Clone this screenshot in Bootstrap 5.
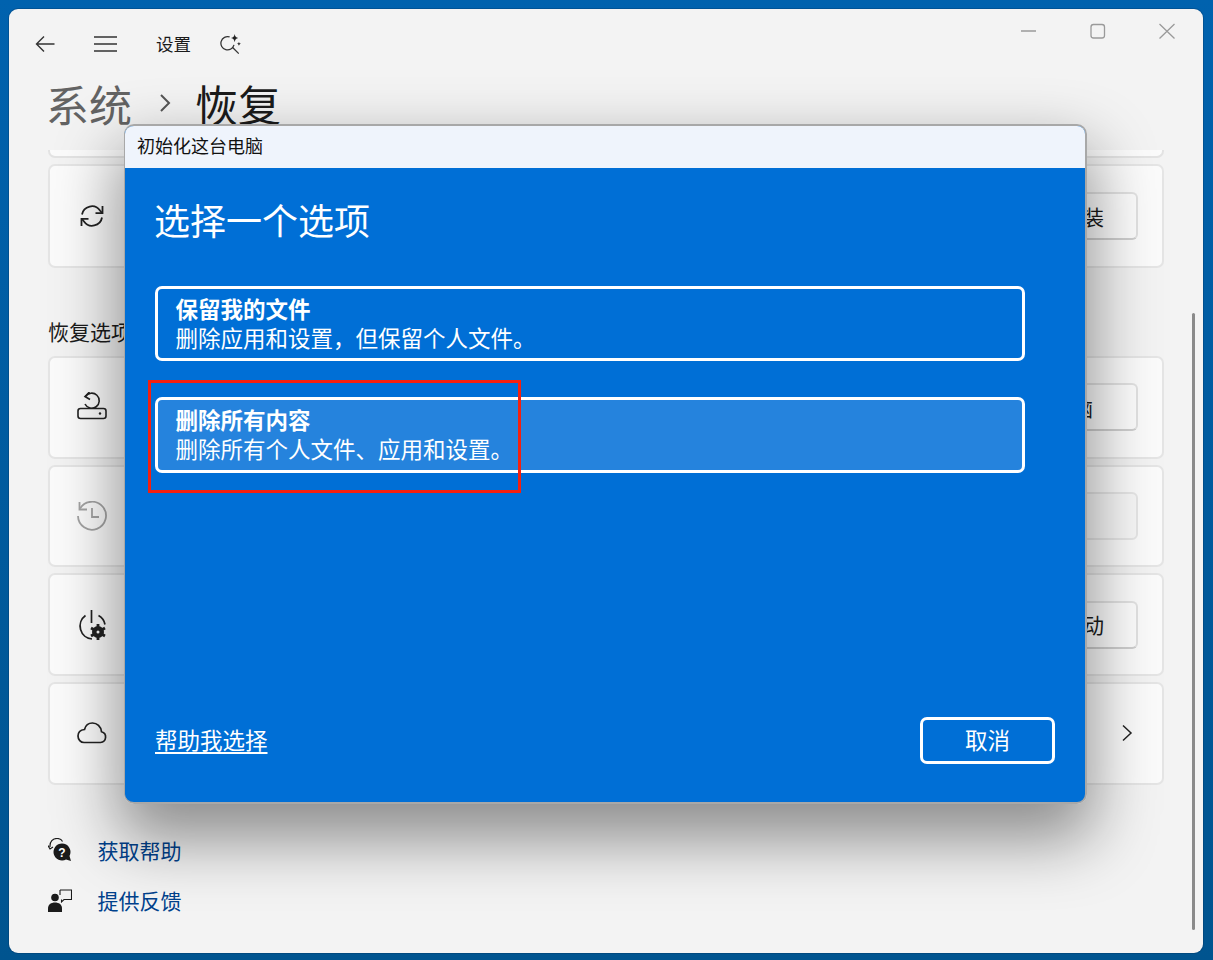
<!DOCTYPE html>
<html lang="zh-CN">
<head>
<meta charset="utf-8">
<title>设置 - 恢复</title>
<link href="https://cdn.jsdelivr.net/npm/bootstrap@5.3.0/dist/css/bootstrap.min.css" rel="stylesheet">
<style>
html,body{height:100%;overflow:hidden}
body{background:linear-gradient(180deg,#0062ae,#00548f);font-family:"Noto Sans CJK SC","Liberation Sans",sans-serif;color:#1b1b1b}
svg{display:block;flex:none}
.win{position:relative;margin:9px 10px 0 9px;height:944px;background:#f3f3f3;border-radius:9px;box-shadow:0 0 0 1px rgba(0,40,80,.25);overflow:hidden}
.tbar{height:70px;padding-left:26px}
.tbar-ham{margin-left:38px}
.tbar-search{margin-left:29px}
.tbar-title{font-size:17.5px;margin-left:39px;line-height:24px}
.winctl{position:absolute;top:0;left:0}
.crumb{height:48px;padding-left:37px;font-size:43px;line-height:48px;font-weight:400;margin:0 0 23px}
.crumb-dim{color:#636363}
.crumb-sep{margin:0 24px 0 27px}
.scroller{padding:0 39px}
.stub{height:8px;background:#fbfbfb;border:2px solid #e3e3e3;border-top:0;border-radius:0 0 7px 7px;margin-bottom:6px}
.row-card{height:102.5px;padding:0 24px 0 27px;background:#fbfbfb;border:2px solid #e5e5e5;border-radius:7px}
.row-card.tall{height:104px}
.sync-ico{margin-left:2px}
.sect{font-size:21px;line-height:30px;margin:48px 0 10px 0}
.stack{row-gap:6.2px}
.act{margin-left:auto;height:48px;width:300px;background:#fdfdfd;border:2px solid #e2e2e2;border-bottom-color:#cfcfcf;border-radius:6px;font-size:21px;line-height:41px;color:#1b1b1b;text-align:right;padding:0 32px 0 0;white-space:nowrap}
.act-wide{padding-right:43px}
.act-off,.act-off:disabled{background:#f8f8f8;border-color:#e6e6e6;opacity:1}
.go{margin-left:auto;margin-right:5px}
.foot{margin-top:50px;row-gap:20px;font-size:21px;line-height:30px}
.foot a{color:#00418c;text-decoration:none;margin-left:25.500px}
.scrollthumb{position:absolute;left:1183px;top:304px;width:3px;height:617px;background:#8a8a8a;border-radius:2px}
.dlg{position:absolute;left:115px;top:115px;width:963px;height:680px;border:2px solid #a8a8a8;border-left-width:1px;border-radius:10px;overflow:hidden;background:#006fd6}
.dlgwrap{position:absolute;left:115px;top:115px;width:963px;height:680px;border-radius:10px;box-shadow:0 30px 64px 6px rgba(0,0,0,.42)}
.dlg-top{height:42px;background:#eff4fc;color:#111;font-size:18px;line-height:38px;padding-left:12px}
.dlg-main{height:635px;padding:28px 30px 39px;color:#fff}
.dlg-h{font-size:36px;line-height:46px;font-weight:400;margin:0 0 44px -1px}
.opt{width:870px;height:75px;border:3px solid #fff;border-radius:7px;padding:5px 17.500px 0;line-height:29px;font-size:22.5px;margin-bottom:36px}
.opt-on{height:76px;background:#2583dd}
.opt b{display:block;font-weight:700}
.opt span{display:block}
.helplink{color:#fff;font-size:22.5px;line-height:30px;text-decoration:underline;text-underline-offset:3px;margin-bottom:4px}
.helplink:hover{color:#fff}
.cancel{width:135px;height:47px;border:3px solid #fff;border-radius:7px;background:transparent;color:#fff;font-size:22.5px;line-height:39px;padding:0 0 2px}
.cancel:hover{color:#fff}
.redmark{position:absolute;left:23px;top:254px;width:373px;height:113px;border:3px solid #f4200f;pointer-events:none}
</style>
</head>
<body>
<main class="win">
  <header class="tbar d-flex align-items-center">
    <svg width="21" height="18" viewBox="0 0 21 18" fill="none" stroke="#333" stroke-width="1.4"><path d="M19.5 9H1.5M9 1.5 1.5 9 9 16.5"/></svg>
    <svg class="tbar-ham" width="23" height="16" viewBox="0 0 23 16" fill="none" stroke="#333" stroke-width="1.5"><path d="M0 1h23M0 8h23M0 15h23"/></svg>
    <span class="tbar-title">设置</span>
    <svg class="tbar-search" width="22" height="21" viewBox="0 0 24 23" fill="none" stroke="#333" stroke-width="1.4"><path d="M10.500 3.200A7.300 7.300 0 1 0 15.300 12"/><path d="m13.500 14.500 7 7"/><path d="M16 0c.6 3 1.300 3.800 4 4.500-2.700.7-3.400 1.500-4 4.500-.6-3-1.300-3.800-4-4.500 2.700-.7 3.400-1.500 4-4.500Z" fill="#222" stroke="none"/><path d="M20.700 8.500c.3 1.500.7 1.900 2.300 2.300-1.600.4-2 .8-2.300 2.300-.3-1.500-.7-1.900-2.300-2.300 1.600-.4 2-.8 2.300-2.300Z" fill="#222" stroke="none"/></svg>
  </header>
  <svg class="winctl" width="1194" height="50" viewBox="0 0 1194 50" fill="none" stroke="#9a9a9a" stroke-width="1.3"><path d="M1012 22h15"/><rect x="1082" y="15.500" width="13.500" height="13.500" rx="2.500"/><path d="m1150.500 15 15 14.500m0-14.500-15 14.500"/></svg>

  <h1 class="crumb d-flex align-items-center"><span class="crumb-dim">系统</span><svg class="crumb-sep" width="12" height="20" viewBox="0 0 12 20" fill="none" stroke="#555" stroke-width="2"><path d="m2 2 8 8-8 8"/></svg><span>恢复</span></h1>

  <section class="scroller">
    <div class="stub"></div>
    <div class="row-card tall d-flex align-items-center">
      <svg class="sync-ico" width="26" height="26" viewBox="0 0 26 26" fill="none" stroke="#222" stroke-width="1.800"><path d="M3 11.500A10 10 0 0 1 21 7.500l2 2.500"/><path d="M23.500 3v7.200h-7"/><path d="M23 14.500A10 10 0 0 1 5 18.500L3 16"/><path d="M2.500 23v-7.200h7"/></svg>
      <button type="button" class="btn act">现在重新安装</button>
    </div>
    <h2 class="sect fw-normal">恢复选项</h2>
    <div class="d-flex flex-column stack">
      <div class="row-card d-flex align-items-center">
        <svg width="30" height="30" viewBox="0 0 30 30" fill="none" stroke="#222" stroke-width="1.600"><path d="M8.500 4.500A7.500 7.500 0 1 1 8 12"/><path d="M12.500 0 8 4.500 13 7.500"/><rect x="1" y="16.500" width="28" height="10" rx="2.500" fill="#fbfbfb"/><circle cx="23" cy="21.500" r="1.200" fill="#222" stroke="none"/></svg>
        <button type="button" class="btn act act-wide">初始化电脑</button>
      </div>
      <div class="row-card d-flex align-items-center">
        <svg width="30" height="30" viewBox="0 0 30 30" fill="none" stroke="#a3a3a3" stroke-width="1.800"><path d="M3 7.500A14 14 0 1 1 1 15"/><path d="M2.500 1v7.500H10"/><path d="M15 7v9h7"/></svg>
        <button type="button" class="btn act act-off" disabled></button>
      </div>
      <div class="row-card d-flex align-items-center">
        <svg width="30" height="30" viewBox="0 0 30 30" fill="none" stroke="#222" stroke-width="1.700"><path d="M8.500 5.500A13 13 0 0 0 15 29"/><path d="M21.500 5.500a13 13 0 0 1 6.500 9"/><path d="M14.500 0v13"/><circle cx="21" cy="22" r="4.500" fill="#222" stroke-width="3"/><path d="M21 14v16M14 18l14 8M14 26l14-8" stroke-width="2.800"/><circle cx="21" cy="22" r="1.500" fill="#fbfbfb" stroke="none"/></svg>
        <button type="button" class="btn act">立即重新启动</button>
      </div>
      <div class="row-card d-flex align-items-center">
        <svg width="30" height="22" viewBox="0 0 30 22" fill="none" stroke="#222" stroke-width="1.700"><path d="M7 20.500h16.500a5.500 5.500 0 0 0 1-10.800C24 4.500 20 1 15.500 1 11.500 1 8.500 3.500 7.500 7.500 3.500 8 1 10.500 1 14c0 3.500 2.700 6.500 6 6.500Z"/></svg>
        <svg class="go" width="12" height="18" viewBox="0 0 12 18" fill="none" stroke="#222" stroke-width="1.500"><path d="m2 1.500 8 7.500-8 7.500"/></svg>
      </div>
    </div>
    <div class="foot d-flex flex-column">
      <div class="d-flex align-items-center">
        <svg width="24" height="24" viewBox="0 0 24 24"><path d="M2 9C1.500 3.500 5 .5 9 .5c2.500 0 4.500 1 5.500 3" fill="none" stroke="#1b1b1b" stroke-width="1.200"/><path d="m0 7.500 2 3.500 3-2" fill="none" stroke="#1b1b1b" stroke-width="1.200"/><path d="M14 5.500a8.500 8.500 0 1 0 4 16l5 1.500-1.500-5A8.500 8.500 0 0 0 14 5.500Z" fill="#1b1b1b"/><text x="14" y="18.500" font-size="12" font-weight="700" fill="#fff" text-anchor="middle" font-family="Liberation Sans,sans-serif">?</text></svg>
        <a href="#">获取帮助</a>
      </div>
      <div class="d-flex align-items-center">
        <svg width="24" height="24" viewBox="0 0 24 24"><circle cx="7" cy="9.500" r="3.800" fill="#1b1b1b"/><path d="M0 24v-3.500C0 16.500 3 14.500 7 14.500s7 2 7 6V24Z" fill="#1b1b1b"/><path d="M12 2h11.500v9.500H16l-2.500 2.500v-2.500" fill="none" stroke="#1b1b1b" stroke-width="1.100"/><path d="M12 2v5" fill="none" stroke="#1b1b1b" stroke-width="1.100"/></svg>
        <a href="#">提供反馈</a>
      </div>
    </div>
  </section>
  <div class="scrollthumb"></div>

  <div class="dlgwrap"></div>
  <div class="dlg" role="dialog" aria-label="初始化这台电脑">
    <div class="dlg-top">初始化这台电脑</div>
    <div class="dlg-main d-flex flex-column">
      <h2 class="dlg-h">选择一个选项</h2>
      <div class="opt"><b>保留我的文件</b><span>删除应用和设置，但保留个人文件。</span></div>
      <div class="opt opt-on"><b>删除所有内容</b><span>删除所有个人文件、应用和设置。</span></div>
      <div class="mt-auto d-flex justify-content-between align-items-center">
        <a class="helplink" href="#">帮助我选择</a>
        <button type="button" class="btn cancel">取消</button>
      </div>
    </div>
    <div class="redmark"></div>
  </div>
</main>
<script src="https://cdn.jsdelivr.net/npm/bootstrap@5.3.0/dist/js/bootstrap.bundle.min.js"></script>
</body>
</html>
